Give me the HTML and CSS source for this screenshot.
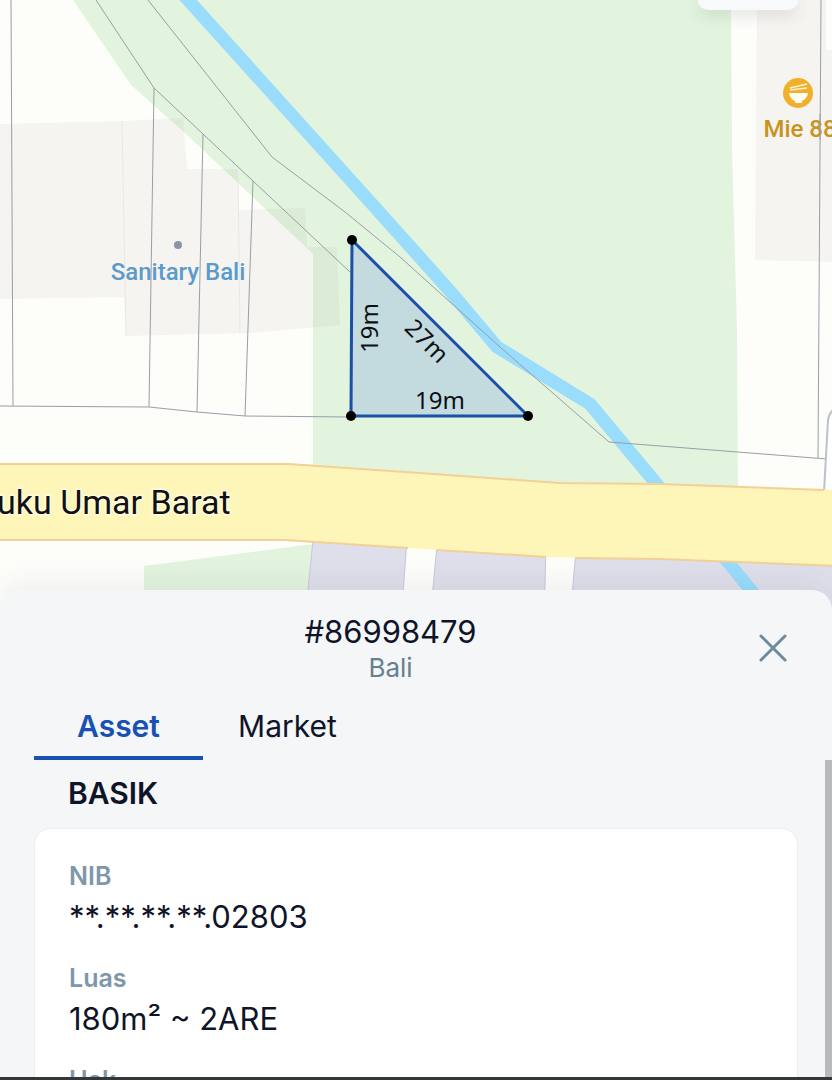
FILE: index.html
```html
<!DOCTYPE html>
<html lang="id">
<head>
    <meta charset="utf-8">
    <meta name="viewport" content="width=device-width, initial-scale=1">
    <title>Asset #86998479</title>
    <link rel="stylesheet" href="styles.css">
</head>
<body>
    <main class="map">
        <svg class="map-svg" viewBox="0 0 832 590" preserveAspectRatio="xMidYMin slice">
            <!-- parks -->
            <path class="park" d="M73 0 L131 85 L185 133 L313 254 V480 L738 500 L737 330 L732 150 L731 0Z"/>
            <path class="park" d="M144 566 L313 544 L308 620 H144Z"/>

            <!-- buildings -->
            <path class="building" d="M0 124 L122 121 L183 118 L187 169 L238 169 L239 210 L305 208 L307 247 L337 247 L340 325 L250 333 L126 336 L124 297 L0 299Z"/>
            <path class="building" d="M757 0 H826 V50 H840 V262 L755 260Z"/>
            <path class="wall" d="M122 121 L126 336 M238 169 L240 333"/>
            <path class="block" d="M313 540 H407 L401 620 H305Z"/>
            <path class="block" d="M437 545 H546 L544 620 H430Z"/>
            <path class="block" d="M576 550 H840 V620 H570Z"/>

            <!-- river -->
            <path class="river" d="M180 -9 L372 204 L449 290 L497 347 L590 404 L660 488 L728 562 L775 620"/>

            <!-- parcel lines -->
            <path class="parcel" d="M11 0 L13 406 M96 0 L154 88 L203 134 L253 181 L350 272 M154 88 L149 407 M203 134 L197 412 M253 181 L245 416"/>
            <path class="parcel" d="M148 0 L272 157 L345 212 L400 257 L500 347 L609 442 L840 460 M821 0 L818 458"/>
            <path class="parcel" d="M0 406 L149 407 L197 412 L245 416 L350 417"/>

            <!-- main road -->
            <path class="lane" d="M824 492 L828 420 Q829 412 836 408 V492Z"/>
            <path class="road" d="M-5 463 H288 L420 473 L560 483 L660 484 L840 490 V566 L660 559 L545 557 L410 548 L285 540 H-5Z"/>
            <path class="road-edge" d="M-5 464 H288 L420 473 L560 483 L660 484 L824 490 M-5 540 H285 L408 548 M437 550 L546 557 M576 558 L660 559 L840 566"/>

            <text class="street" x="-3" y="514">uku Umar Barat</text>

            <!-- places -->
            <circle cx="178" cy="245" r="4" fill="#8794aa"/>
            <text class="place shop" x="178" y="280">Sanitary Bali</text>
            <circle cx="798" cy="93" r="15" fill="#f0b02c"/>
            <path d="M789 93 H808 Q807 99 802 101 V103 H795 V101 Q790 99 789 93Z" fill="#fffdf2"/>
            <path d="M790 88 L807 84 M790 90 L807 88" stroke="#fff3cf" stroke-width="1.5" fill="none"/>
            <text class="place food" x="800" y="137">Mie 88</text>
            <path class="parcel" d="M820 114 L820 140"/>

            <!-- selected asset -->
            <path class="asset" d="M352 240 L351 416 H528Z"/>
            <circle cx="352" cy="240" r="5"/>
            <circle cx="351" cy="416" r="5"/>
            <circle cx="528" cy="416" r="5"/>
            <text class="side" x="440" y="409">19m</text>
            <text class="side" transform="translate(378 328) rotate(-90)">19m</text>
            <text class="side" transform="translate(421 347) rotate(45)">27m</text>
        </svg>
        <button class="map-btn" aria-label="Map layers"></button>
    </main>

    <section class="sheet">
        <header class="sheet-header">
            <div class="heading">
                <h1>#86998479</h1>
                <p>Bali</p>
            </div>
            <button class="close" aria-label="Close">
                <svg width="28" height="28" viewBox="0 0 28 28"><path d="M2 2 L26 26 M26 2 L2 26"/></svg>
            </button>
        </header>

        <nav class="tabs">
            <button class="tab active">Asset</button>
            <button class="tab">Market</button>
        </nav>

        <div class="content">
            <h2>BASIK</h2>
            <dl class="card">
                <div class="field">
                    <dt>NIB</dt>
                    <dd>**.**.**.**.02803</dd>
                </div>
                <div class="field">
                    <dt>Luas</dt>
                    <dd>180m² ~ 2ARE</dd>
                </div>
                <div class="field">
                    <dt>Hak</dt>
                </div>
            </dl>
            <div class="scroll-thumb"></div>
        </div>
    </section>
</body>
</html>
```
FILE: styles.css
```css
*{
    box-sizing: border-box;
}
body,html{
    margin: 0;
    padding: 0;
    height: 100%;
}
body{
    display: flex;
    flex-direction: column;
    overflow: hidden;
    font-family: Inter, "Liberation Sans", sans-serif;
    color: #0f1428;
    background-color: #fdfdfa;
}
button{
    border: none;
    background: none;
    padding: 0;
    font-family: inherit;
    color: inherit;
    cursor: pointer;
}

/* map */
.map{
    flex: 1;
    min-height: 0;
    position: relative;
}
.map-svg{
    display: block;
    width: 100%;
    height: 100%;
    overflow: visible;
}
.park{
    fill: #e2f4de;
}
.building{
    fill: rgba(120, 80, 60, 0.05);
}
.wall{
    fill: none;
    stroke: #e9e8e4;
    stroke-width: 1;
}
.block{
    fill: #dedfea;
    stroke: #c5c9da;
    stroke-width: 1;
}
.river{
    fill: none;
    stroke: #99dcfb;
    stroke-width: 13;
    stroke-linejoin: round;
}
.parcel{
    fill: none;
    stroke: #979fa8;
    stroke-width: 1;
}
.lane{
    fill: #ffffff;
    stroke: #bcc1cd;
    stroke-width: 2;
}
.road{
    fill: #fef5b8;
}
.road-edge{
    fill: none;
    stroke: #f3d096;
    stroke-width: 2;
}
.street{
    font-family: Roboto, sans-serif;
    font-size: 34px;
    fill: #111111;
    stroke: #fffbe0;
    stroke-width: 3;
    paint-order: stroke;
}
.place{
    font-family: Roboto, sans-serif;
    font-size: 24px;
    font-weight: 500;
    text-anchor: middle;
}
.shop{
    fill: #5b9bcb;
}
.food{
    fill: #c9921f;
}
.asset{
    fill: #c3dbdf;
    stroke: #1b4fa8;
    stroke-width: 3;
}
.side{
    font-family: "Noto Sans", sans-serif;
    font-size: 24px;
    text-anchor: middle;
    fill: #0c0f14;
}
.map-btn{
    position: absolute;
    top: 0;
    right: 34px;
    width: 100px;
    height: 10px;
    border-radius: 0 0 16px 16px;
    background-color: #f7f9fb;
    box-shadow: 0 4px 16px rgba(60, 80, 90, 0.18);
}

/* bottom sheet */
.sheet{
    flex: 0 0 calc(45% + 4px);
    min-height: 0;
    position: relative;
    display: flex;
    flex-direction: column;
    background-color: #f4f6f8;
    border-radius: 20px 20px 0 0;
    border-bottom: 3px solid #35363a;
    box-shadow: 0 -6px 30px rgba(60, 70, 90, 0.08);
}
.sheet-header{
    display: flex;
    align-items: center;
    padding: 22px 33px 0 34px;
}
.heading{
    flex: 1;
    text-align: center;
}
h1{
    margin: 0;
    font-size: 31px;
    line-height: 40px;
    font-weight: 400;
}
.heading p{
    margin: 0;
    font-size: 26px;
    line-height: 32px;
    color: #66808f;
}
.close{
    width: 52px;
    height: 52px;
    display: grid;
    place-items: center;
}
.close path{
    fill: none;
    stroke: #6d8b9f;
    stroke-width: 3;
    stroke-linecap: round;
}
.tabs{
    display: flex;
    padding: 0 34px;
    margin-top: 18px;
}
.tab{
    width: 169px;
    font-size: 30px;
    line-height: 48px;
    padding-bottom: 6px;
    border-bottom: 4px solid transparent;
}
.tab.active{
    color: #1850b4;
    font-weight: 600;
    border-bottom-color: #1850b4;
}
.content{
    flex: 1;
    min-height: 0;
    position: relative;
    overflow: hidden;
    padding: 13px 34px 0;
}
h2{
    margin: 0 0 15px;
    padding-left: 34px;
    font-size: 30px;
    line-height: 40px;
    font-weight: 600;
}
.card{
    margin: 0;
    padding: 29px 34px;
    background-color: #ffffff;
    border: 1px solid #eceef1;
    border-radius: 16px;
}
.field{
    margin-bottom: 22px;
}
dt{
    font-size: 25px;
    line-height: 36px;
    font-weight: 600;
    color: #7e97aa;
}
dd{
    margin: 2px 0 0;
    font-size: 31px;
    line-height: 42px;
}
.scroll-thumb{
    position: absolute;
    top: 0;
    right: 0;
    width: 7px;
    height: 100%;
    background-color: #b9babc;
}
```
